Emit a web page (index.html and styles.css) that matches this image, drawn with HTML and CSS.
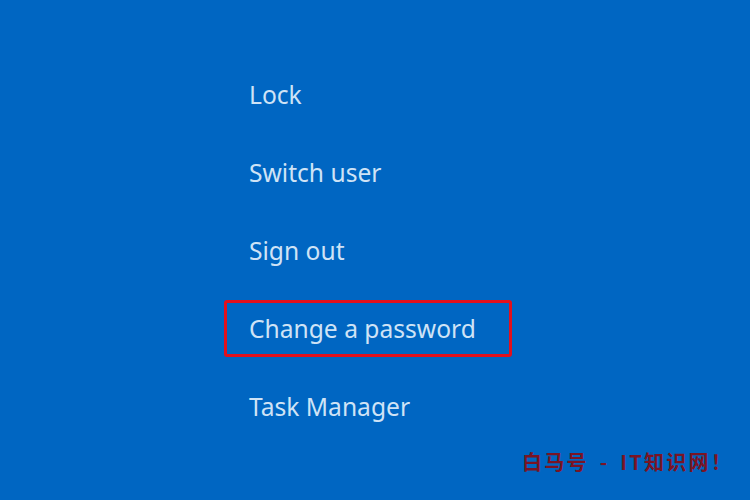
FILE: index.html
```html
<!DOCTYPE html>
<html lang="en">
  <head>
    <meta charset="UTF-8" />
    <title>Security options</title>
    <link rel="stylesheet" href="styles.css">
  </head>
  <body>
    <ul class="options">
      <li class="option"><span>Lock</span></li>
      <li class="option"><span>Switch user</span></li>
      <li class="option"><span>Sign out</span></li>
      <li class="option"><span class="highlight">Change a password</span></li>
      <li class="option"><span>Task Manager</span></li>
    </ul>
    <div class="watermark">白马号 - IT知识网！</div>
  </body>
</html>
```

FILE: styles.css
```css
* {
  margin: 0;
  padding: 0;
  box-sizing: border-box;
}

body {
  width: 750px;
  height: 500px;
  background-color: #0066c2;
  font-family: "Noto Sans", sans-serif;
  color: #cfe3f6;
  overflow: hidden;
  position: relative;
}

.options {
  list-style: none;
  padding: 55px 0 0 249px;
}

.option {
  height: 78px;
  display: flex;
  align-items: center;
  font-size: 24.6px;
}

.highlight {
  display: inline-flex;
  align-items: center;
  height: 57px;
  width: 288px;
  margin-left: -25px;
  padding-left: 22px;
  border: 3px solid #e3101c;
  border-radius: 3px;
}

.watermark {
  position: absolute;
  left: 522px;
  top: 447px;
  font-family: "Noto Sans CJK SC", sans-serif;
  font-weight: 700;
  font-size: 20px;
  color: #7a1424;
  letter-spacing: 2.3px;
  word-spacing: 4px;
}
```
